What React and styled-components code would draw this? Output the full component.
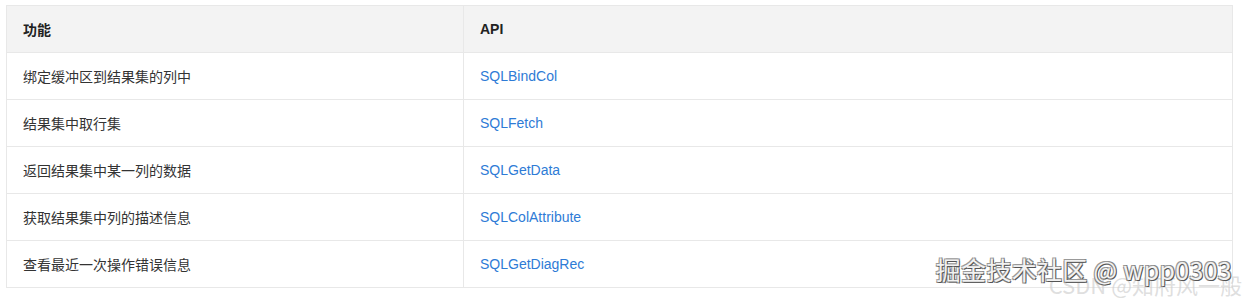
import React from "react";
import styled, { createGlobalStyle } from "styled-components";

const Global = createGlobalStyle`
  html, body { margin: 0; padding: 0; background: #fff; }
  body { font-family: "Liberation Sans", "Noto Sans CJK SC", sans-serif; }
`;

const Page = styled.div`
  position: relative;
  width: 1244px;
  height: 302px;
  padding: 5px 0 0 6px;
  box-sizing: border-box;
  overflow: hidden;
`;

const Table = styled.table`
  width: 1227px;
  border-collapse: collapse;
  font-size: 14px;
  color: #333;
  table-layout: fixed;
`;

const HeadCell = styled.th`
  background: #f3f3f3;
  font-weight: bold;
  text-align: left;
  height: 46px;
  padding: 0 16px;
  border: 1px solid #e8e8e8;
  width: ${(p) => p.$w || "auto"};
  color: #222;
`;

const Cell = styled.td`
  height: 46px;
  padding: 0 16px;
  border: 1px solid #e8e8e8;
`;

const Link = styled.a`
  color: #2e7bd6;
  text-decoration: none;
`;

const Watermark = styled.div`
  position: absolute;
  right: ${(p) => p.$right}px;
  top: ${(p) => p.$top}px;
  font-size: ${(p) => p.$size}px;
  font-family: "Noto Sans CJK SC", "Liberation Sans", sans-serif;
  white-space: nowrap;
  pointer-events: none;
  line-height: 1;
`;

const Csdn = styled(Watermark)`
  color: rgba(205, 205, 205, 0.65);
`;

const Juejin = styled(Watermark)`
  color: #f2f2f2;
  letter-spacing: 0.3px;
  text-shadow: 1px 1px 0 #555, -1px -1px 0 #999, 1px -1px 0 #888, -1px 1px 0 #888;
`;

const rows = [
  ["绑定缓冲区到结果集的列中", "SQLBindCol"],
  ["结果集中取行集", "SQLFetch"],
  ["返回结果集中某一列的数据", "SQLGetData"],
  ["获取结果集中列的描述信息", "SQLColAttribute"],
  ["查看最近一次操作错误信息", "SQLGetDiagRec"],
];

export default function App() {
  return (
    <>
      <Global />
      <Page>
        <Table>
          <thead>
            <tr>
              <HeadCell $w="424px">功能</HeadCell>
              <HeadCell>API</HeadCell>
            </tr>
          </thead>
          <tbody>
            {rows.map(([a, b]) => (
              <tr key={b}>
                <Cell>{a}</Cell>
                <Cell>
                  <Link href="#">{b}</Link>
                </Cell>
              </tr>
            ))}
          </tbody>
        </Table>
        <Csdn $right={2} $top={273} $size={22}>CSDN @知府风一般</Csdn>
        <Juejin $right={12} $top={257} $size={25}>掘金技术社区 @ wpp0303</Juejin>
      </Page>
    </>
  );
}
